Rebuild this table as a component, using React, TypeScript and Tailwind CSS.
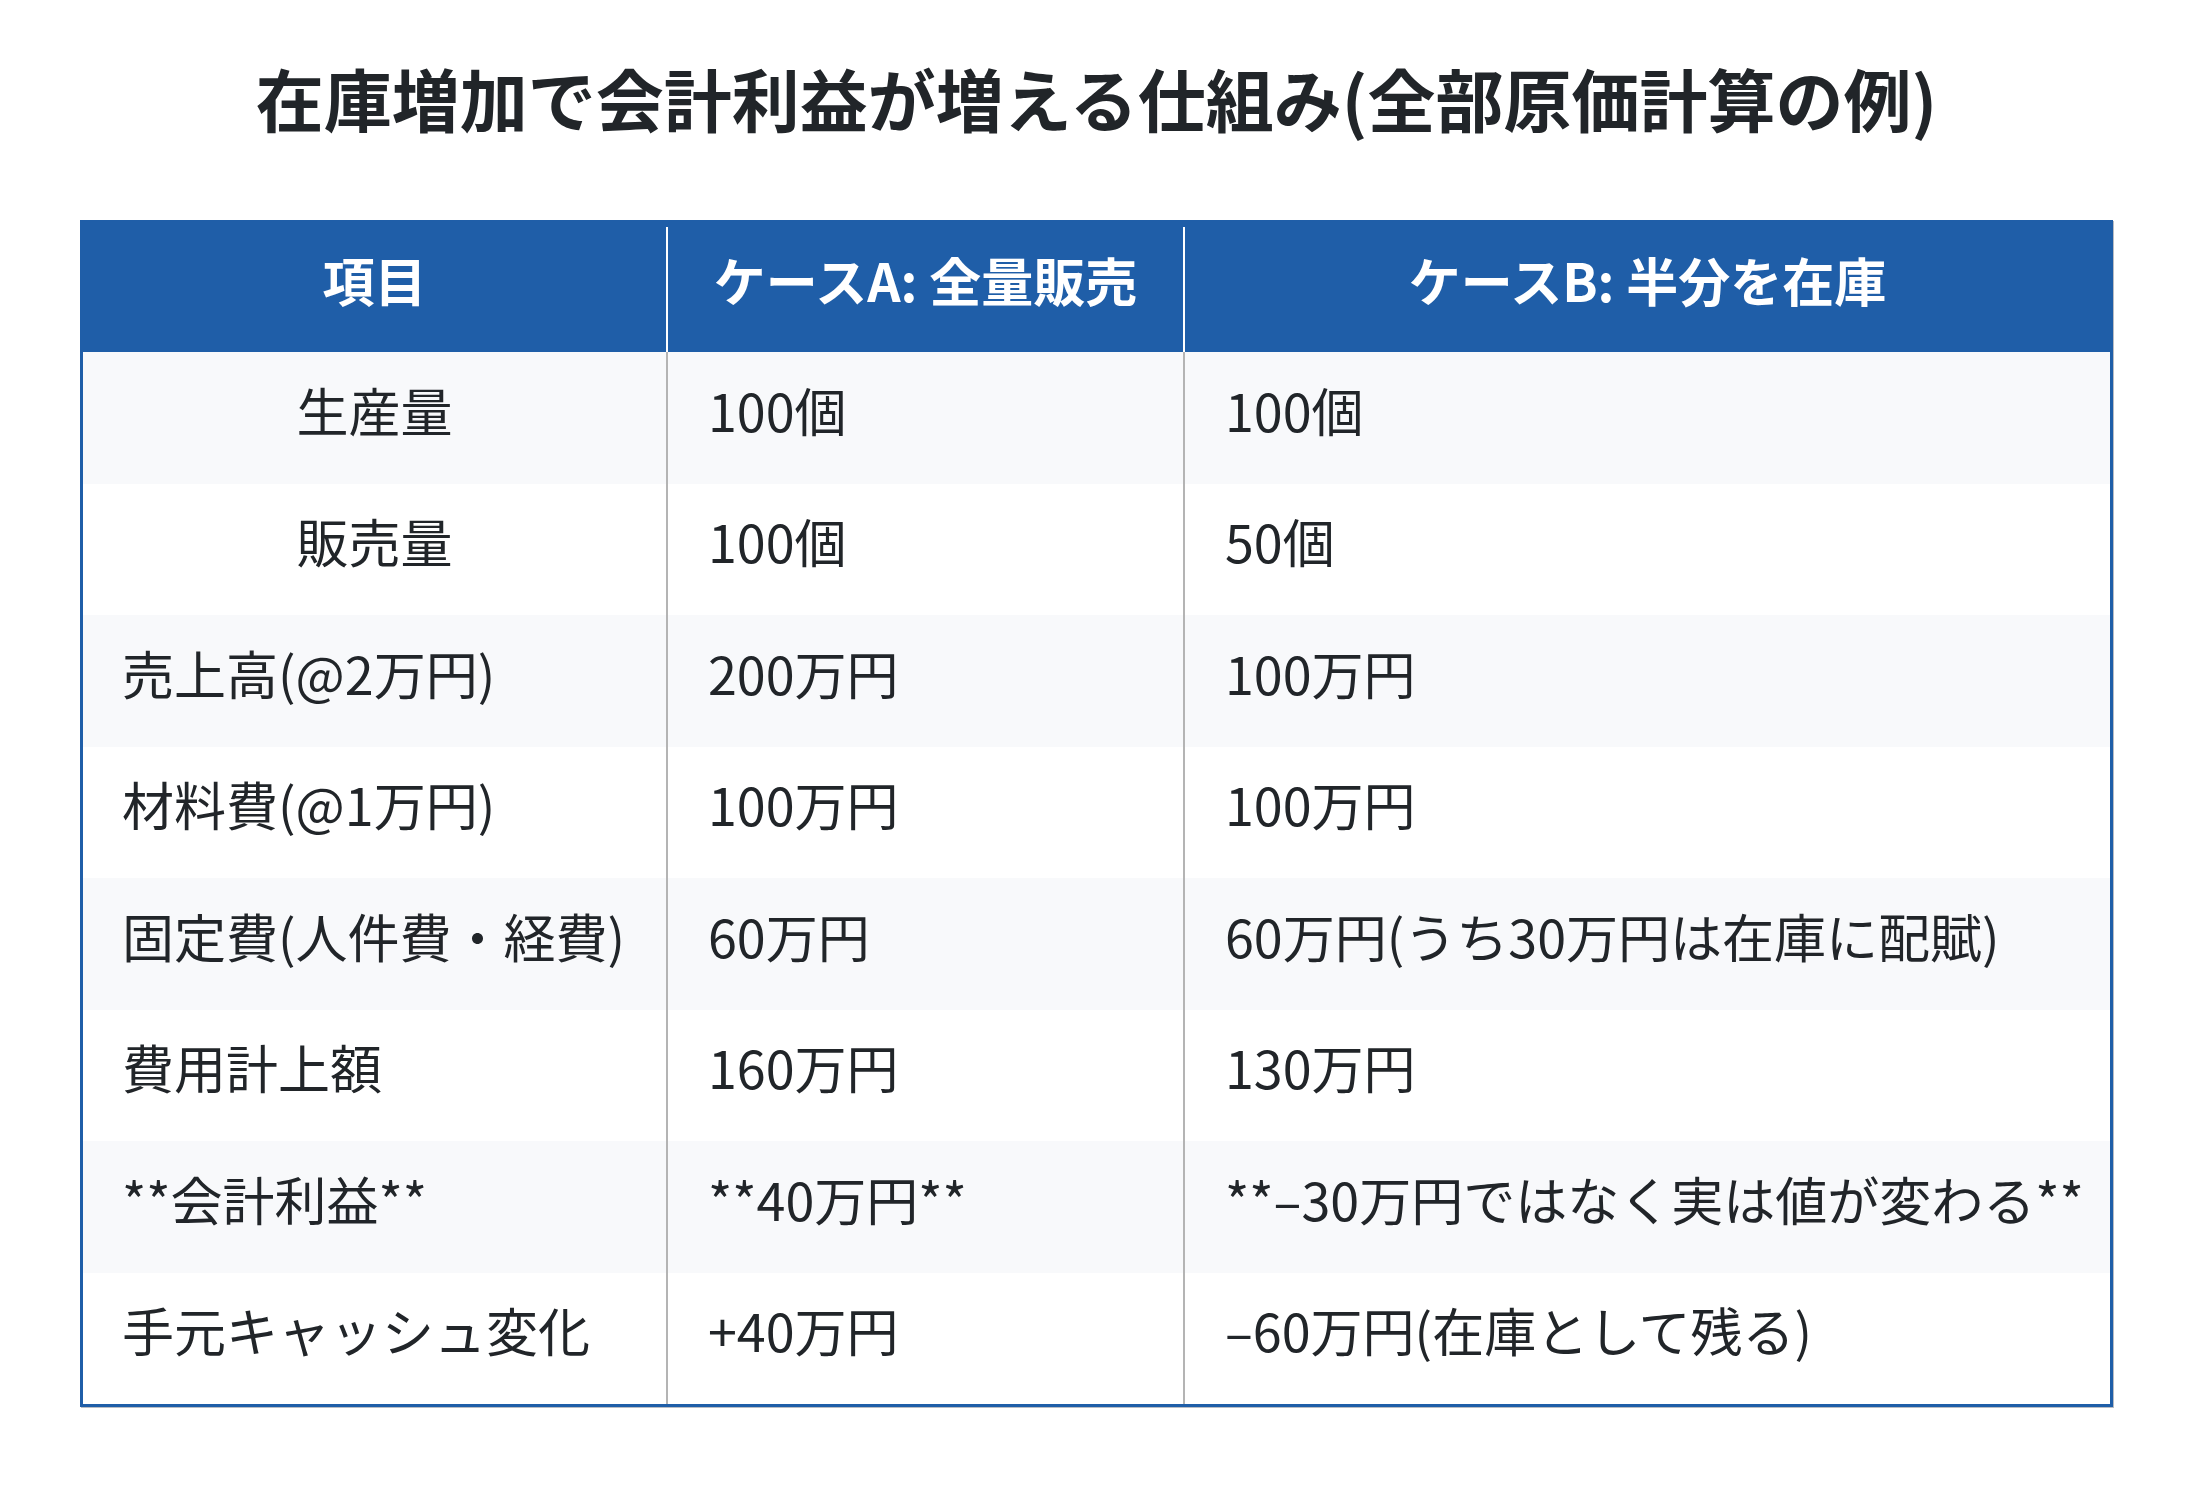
import React from "react";

const rows: { item: string; a: string; b: string; center?: boolean }[] = [
  { item: "生産量", a: "100個", b: "100個", center: true },
  { item: "販売量", a: "100個", b: "50個", center: true },
  { item: "売上高(@2万円)", a: "200万円", b: "100万円" },
  { item: "材料費(@1万円)", a: "100万円", b: "100万円" },
  { item: "固定費(人件費・経費)", a: "60万円", b: "60万円(うち30万円は在庫に配賦)" },
  { item: "費用計上額", a: "160万円", b: "130万円" },
  { item: "**会計利益**", a: "**40万円**", b: "**–30万円ではなく実は値が変わる**" },
  { item: "手元キャッシュ変化", a: "+40万円", b: "–60万円(在庫として残る)" },
];

const cols = "grid grid-cols-[583px_517px_1fr]";

export default function App() {
  return (
    <div
      className="min-h-screen w-full bg-white px-20 pt-[55px] text-[#212529]"
      style={{ fontFamily: '"Noto Sans CJK JP", "Noto Sans", sans-serif' }}
    >
      <h1 className="text-center text-[68px] font-bold leading-[86px]">
        在庫増加で会計利益が増える仕組み(全部原価計算の例)
      </h1>

      <div className="mt-[79px] border-[3px] border-[#1f5ea8] shadow-[1px_1px_0_#b9bcc2]">
        <div className={`${cols} h-[129px] bg-[#1f5ea8] text-[52px] font-bold text-white`}>
          <div className="flex items-center justify-center pb-4">項目</div>
          <div className="mt-1 flex items-center justify-center border-l-2 border-white pb-5">ケースA: 全量販売</div>
          <div className="mt-1 flex items-center justify-center border-l-2 border-white pb-5">ケースB: 半分を在庫</div>
        </div>

        {rows.map((r, i) => (
          <div
            key={i}
            className={`${cols} h-[131.5px] text-[52px] font-normal ${i % 2 === 0 ? "bg-[#f8f9fb]" : "bg-white"}`}
          >
            <div className={`flex items-center pb-4 ${r.center ? "justify-center" : "pl-[39px]"}`}>{r.item}</div>
            <div className="flex items-center border-l-2 border-[#b4b4b4] pb-4 pl-10">{r.a}</div>
            <div className="flex items-center border-l-2 border-[#b4b4b4] pb-4 pl-10">{r.b}</div>
          </div>
        ))}
      </div>
    </div>
  );
}
